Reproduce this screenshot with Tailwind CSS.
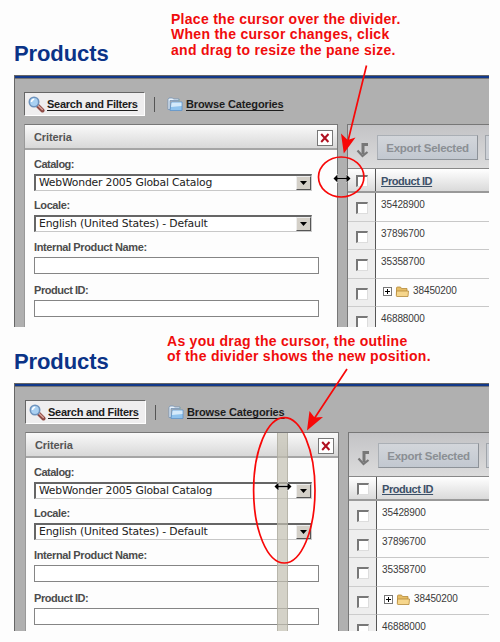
<!DOCTYPE html>
<html lang="en">
<head>
<meta charset="utf-8">
<title>Products</title>
<script src="https://cdn.jsdelivr.net/npm/@tailwindcss/browser@4"></script>
</head>
<body class="relative h-[642px] w-[500px] overflow-hidden bg-[#fdfdfd] font-['Liberation_Sans',Arial,sans-serif] text-[11px] leading-[12px] text-[#4c4c4c]">

<main id="screens"></main>

<template id="screen">
  <section>
    <header class="flex items-end pb-[8px] pl-[14px]">
      <h1 class="text-[22px] leading-[27px] font-bold tracking-[-0.1px] text-[#0b3387]">Products</h1>
    </header>
    <div data-part="frame" class="ml-[14px] w-[475px] overflow-hidden border-t border-l border-[#666] bg-[#b0b0b0]">
      <div class="h-[3px] border-b border-[#777] bg-[#12398a]"></div>
      <div data-part="content" class="pt-[13px]">
        <nav class="flex h-[24px] items-center font-bold text-[#1c1c1c]">
          <div class="flex h-[24px] w-[121px] items-center border-t border-l border-t-[#666] border-l-[#666] border-r border-b border-r-white border-b-white bg-[#efeeef] pl-[3px]">
            <svg width="17" height="17" viewBox="0 0 17 17"><path d="M9.5 9.5l5 5" stroke="#8d4a45" stroke-width="4" stroke-linecap="round"/><path d="M9.5 9l4.8 4.6" stroke="#d9a49a" stroke-width="1.4" stroke-linecap="round"/><circle cx="6" cy="6" r="4.7" fill="#a9d0f2" stroke="#6e93bd" stroke-width="1.6"/><path d="M3.5 6a2.7 2.7 0 0 1 2.7-2.7" stroke="#fff" stroke-width="1.6" fill="none"/></svg>
            <span class="ml-[2px] whitespace-nowrap tracking-[-0.26px] underline underline-offset-2">Search and Filters</span>
          </div>
          <i class="ml-[9px] h-[15px] w-px bg-[#555]"></i>
          <svg class="ml-[12px]" width="16" height="15" viewBox="0 0 16 15"><path d="M1 2.5V12.500h2V3.500h9V2H6.500L5.500 1H2z" fill="#e8f2fb" stroke="#7593b5" stroke-width=".8"/><path d="M3 13.500L4.500 5H15v8.500z" fill="#8fc3ee" stroke="#5e93c9" stroke-width=".8"/><path d="M4.500 5.500h10v3.500L4 10z" fill="#d4eafb"/><path d="M12 2v3" stroke="#8aa"/></svg>
          <span class="ml-[3px] whitespace-nowrap tracking-[-0.12px] underline underline-offset-2">Browse Categories</span>
        </nav>

        <div class="mt-[8px] flex h-[230px] gap-[9px]">
          <form class="w-[314px] shrink-0 border border-b-0 border-[#777] border-l-[#999] bg-[#fdfdfd]">
            <div class="flex h-[25px] items-center justify-between border-b-2 border-[#a5a5a5] bg-linear-to-b from-[#fafafa] to-[#d8d8d8] pr-[4px] pl-[9px]">
              <h2 class="font-bold tracking-[-0.1px] text-[#555]">Criteria</h2>
              <span class="mt-[2px] flex h-[16px] w-[16px] items-center justify-center border border-[#777] bg-white">
                <svg width="10" height="10" viewBox="0 0 10 10"><path d="M1.200 1l7.200 8M8.500 1L1.200 9" stroke="#b01020" stroke-width="2"/></svg>
              </span>
            </div>
            <div data-part="fields" class="flex flex-col pt-[8px] font-bold">
              <label class="tracking-[-0.5px]">Catalog:</label>
              <div class="mt-[4px] flex h-[17px] w-[278px] items-center justify-between border-t-2 border-l-2 border-r border-b border-t-[#666] border-l-[#666] border-r-[#ccc] border-b-[#c8c8c8] bg-white pl-[3px] font-['DejaVu_Sans',Verdana,sans-serif] text-[10.800px] font-normal tracking-[-0.19px] text-[#222]">
                <span>WebWonder 2005 Global Catalog</span>
                <i class="flex h-[14px] w-[15px] items-center justify-center border border-t-[#eee] border-l-[#eee] border-r-[#555] border-b-[#555] bg-[#d4d0c8]"><svg width="7" height="4"><path d="M0 0h7L3.500 4z"/></svg></i>
              </div>
              <label class="mt-[8px] tracking-[-0.4px]">Locale:</label>
              <div class="mt-[4px] flex h-[17px] w-[278px] items-center justify-between border-t-2 border-l-2 border-r border-b border-t-[#666] border-l-[#666] border-r-[#ccc] border-b-[#c8c8c8] bg-white pl-[3px] font-['DejaVu_Sans',Verdana,sans-serif] text-[10.800px] font-normal tracking-[-0.17px] text-[#222]">
                <span>English (United States) - Default</span>
                <i class="flex h-[14px] w-[15px] items-center justify-center border border-t-[#eee] border-l-[#eee] border-r-[#555] border-b-[#555] bg-[#d4d0c8]"><svg width="7" height="4"><path d="M0 0h7L3.500 4z"/></svg></i>
              </div>
              <label class="mt-[9px] tracking-[-0.38px]">Internal Product Name:</label>
              <div class="mt-[4px] h-[17px] w-[285px] border border-[#858585] bg-white"></div>
              <label class="mt-[10px] tracking-[-0.45px]">Product ID:</label>
              <div class="mt-[4px] h-[17px] w-[285px] border border-[#858585] bg-white"></div>
            </div>
          </form>

          <div class="w-[160px] shrink-0 border-t border-l border-[#777] bg-[#fdfdfd]">
            <div class="flex h-[43px] items-start bg-linear-to-b from-[#c3c3c6] to-[#dcdcdc] pt-[10px] pl-[8px]">
              <svg class="mt-[8px] shrink-0" width="13" height="15" viewBox="0 0 13 15"><path d="M12 1.500H7V11" fill="none" stroke="#777" stroke-width="3"/><path d="M1.500 7.500L6.500 13l5-4" fill="none" stroke="#777" stroke-width="2.200"/></svg>
              <span class="ml-[8px] flex h-[25px] w-[101px] shrink-0 items-center justify-center border border-[#aaafb5] border-r-[#8d9298] border-b-[#8d9298] bg-linear-to-b from-[#d3d6db] to-[#c2c8d0] text-[11.500px] font-bold tracking-[-0.3px] whitespace-nowrap text-[#8b8f94]">Export Selected</span>
              <i class="ml-[7px] h-[25px] w-[30px] shrink-0 border border-[#a0a5ab] bg-[#ccd0d6]"></i>
            </div>
            <div class="flex h-[25px] border-t border-b-2 border-t-[#888] border-b-[#999] bg-linear-to-b from-white to-[#dadada]">
              <div class="w-[28px] border-r border-[#555] pt-[6px] pl-[8px]"><i class="block h-[12px] w-[12px] border-t-2 border-l-2 border-r border-b border-t-[#777] border-l-[#777] border-r-[#ddd] border-b-[#ddd] bg-white"></i></div>
              <div class="pt-[6px] pl-[5px] font-bold tracking-[-0.45px] text-[#3c5068] underline">Product ID</div>
            </div>
            <div data-part="rows" class="text-[10px] tracking-[-0.1px] text-[#3a3a3a]"></div>
          </div>
        </div>
      </div>
    </div>
  </section>
</template>

<template id="row">
  <div class="flex h-[28.500px]">
    <div class="w-[28px] shrink-0 border-r border-b border-r-[#555] border-b-[#ccc] bg-[#eee] pt-[9px] pl-[8px]"><i class="block h-[12px] w-[12px] border-t-2 border-l-2 border-r border-b border-t-[#777] border-l-[#777] border-r-[#ddd] border-b-[#ddd] bg-white"></i></div>
    <div class="flex flex-1 items-start border-b border-[#c8c8c8] pt-[6px] pl-[5px]">
      <span data-part="tree" class="hidden">
        <svg class="ml-[2px]" width="28" height="13" viewBox="0 0 28 13"><rect x=".5" y="2.500" width="8" height="8" fill="#fff" stroke="#777"/><path d="M2 6.500h5M4.500 4v5" stroke="#000"/><path d="M13.500 10.500V3q0-1 1-1h3l1 1.500H24V11" fill="#e5bc65" stroke="#b58a3a" stroke-width=".8"/><path d="M14 11.500q-.8 0-.7-1L13.500 6H25.500l-.5 5.500z" fill="#f6d68c" stroke="#b58a3a" stroke-width=".8"/></svg>
      </span>
      <span data-part="id"></span>
    </div>
  </div>
</template>

<script>
const ids = ["35428900", "37896700", "35358700", "38450200", "46888000"];
const screens = [
  { header: 75, frame: 252, inset: 9, fields: 9 },
  { header: 56, frame: 248, inset: 10, fields: 8 },
];
for (const s of screens) {
  const node = document.getElementById("screen").content.cloneNode(true);
  node.querySelector("header").style.height = s.header + "px";
  node.querySelector("[data-part=frame]").style.height = s.frame + "px";
  node.querySelector("[data-part=content]").style.paddingLeft = s.inset + "px";
  node.querySelector("[data-part=fields]").style.paddingLeft = s.fields + "px";
  for (const id of ids) {
    const row = document.getElementById("row").content.cloneNode(true);
    row.querySelector("[data-part=id]").textContent = id;
    if (id === "38450200") {
      row.querySelector("[data-part=tree]").classList.remove("hidden");
      row.querySelector("[data-part=id]").style.marginLeft = "2px";
    }
    node.querySelector("[data-part=rows]").append(row);
  }
  document.getElementById("screens").append(node);
}
</script>

<!-- outline of the dragged divider -->
<div class="absolute top-[433px] left-[277px] h-[198px] w-[11px] border-x border-[#a5a398]/60 bg-[#c2bfb0]/70"></div>

<!-- callouts -->
<p class="absolute top-[12px] left-[171px] text-[14px] leading-[15.300px] font-bold tracking-[0.28px] whitespace-nowrap text-[#f00c0c]">Place the cursor over the divider.<br>When the cursor changes, click<br>and drag to resize the pane size.</p>
<p class="absolute top-[334px] left-[167px] text-[14px] leading-[15.300px] font-bold tracking-[0.27px] whitespace-nowrap text-[#f00c0c]">As you drag the cursor, the outline<br>of the divider shows the new position.</p>
<svg class="absolute top-0 left-0" width="500" height="642" viewBox="0 0 500 642">
  <g fill="none" stroke="#f80808" stroke-width="1.700">
    <path d="M366.500 65.500L348 141M347 369L314 419"/>
    <ellipse cx="341.200" cy="177" rx="22.700" ry="20"/>
    <ellipse cx="284.300" cy="490.300" rx="30.700" ry="72.700"/>
  </g>
  <path d="M343.800 153.500L341 133.500L347.700 140L355.500 137.500zM307 430.500L309.500 411L314.500 417.500L323 417z" fill="#f80808"/>
  <g id="resize" transform="translate(342 178.500)">
    <path d="M-8.500 0L-4.500-4V-.7H4.500V-4L8.500 0L4.500 4V.7H-4.500V4z" fill="#000" stroke="#fff" stroke-width="1" paint-order="stroke"/>
  </g>
  <use href="#resize" x="-59" y="308"/>
</svg>
</body>
</html>
